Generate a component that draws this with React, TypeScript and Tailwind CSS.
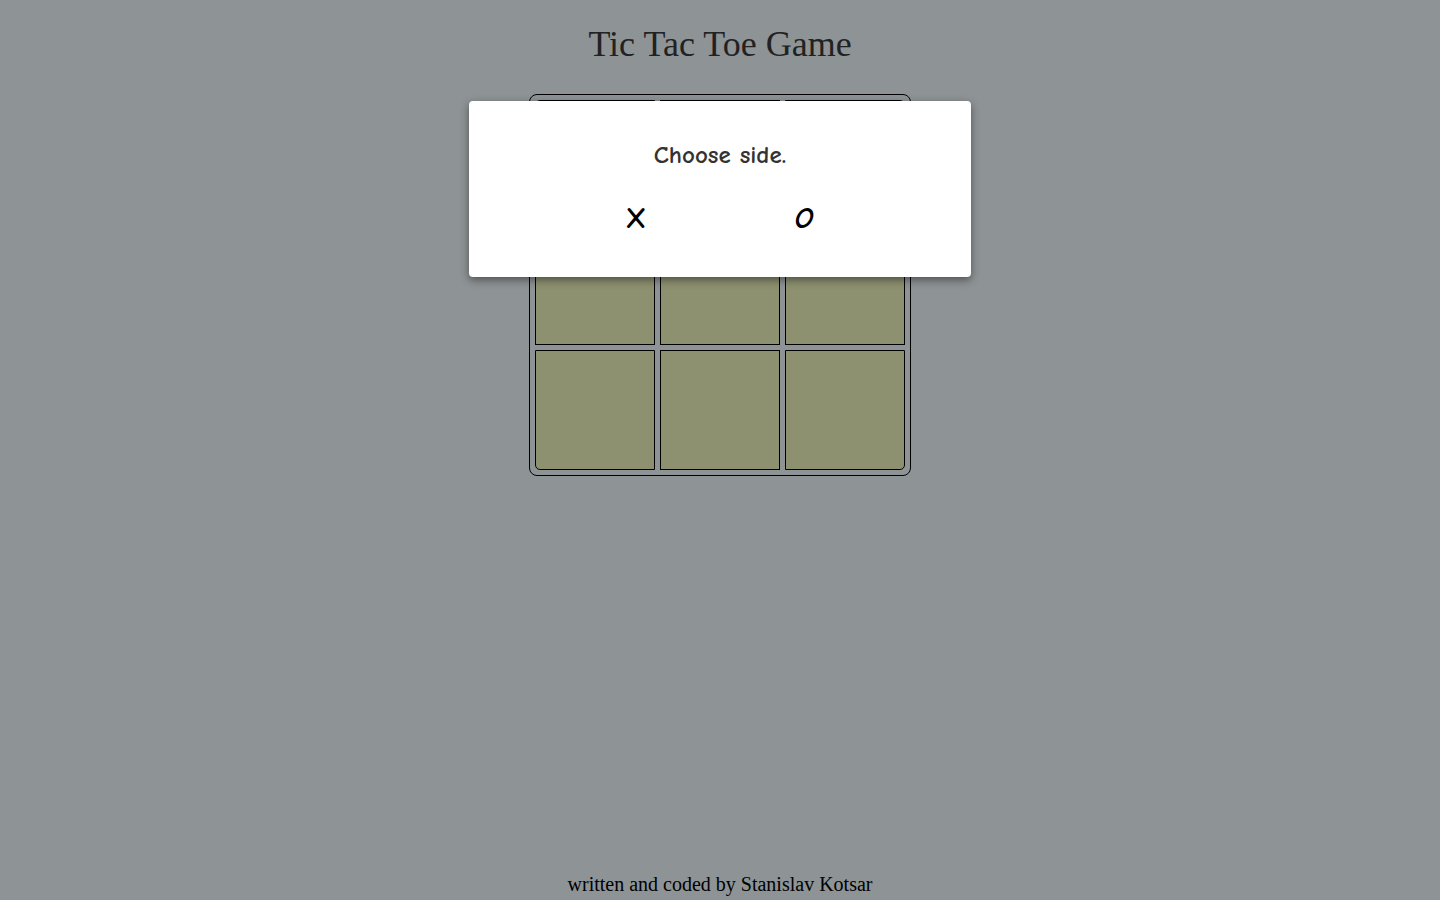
import React from 'react'

const cells = [0, 1, 2, 3, 4, 5, 6, 7, 8]

function cellRadius(i: number) {
  if (i === 0) return 'rounded-tl-[5px]'
  if (i === 2) return 'rounded-tr-[5px]'
  if (i === 6) return 'rounded-bl-[5px]'
  if (i === 8) return 'rounded-br-[5px]'
  return ''
}

export default function App() {
  return (
    <div className="relative min-h-screen bg-[#8e9396] flex flex-col items-center font-['Liberation_Serif',serif]">
      <h1 className="mt-[22px] h-[44px] text-[36px] leading-[44px] text-[#222]">Tic Tac Toe Game</h1>

      <div className="mt-[28px] w-[382px] h-[382px] border border-black rounded-[8px] p-[5px] grid grid-cols-3 gap-[5px]">
        {cells.map((i) => (
          <div key={i} className={`bg-[#8d9170] border border-black ${cellRadius(i)}`} />
        ))}
      </div>

      <div className="absolute left-[469px] top-[101px] w-[502px] h-[176px] bg-white rounded-[4px] shadow-[0_3px_8px_rgba(0,0,0,0.45)] flex flex-col items-center font-['Comic_Sans_MS','Comic_Neue','DejaVu_Sans',sans-serif]">
        <p className="mt-[39px] text-[25px] leading-[30px] font-bold text-[#333]">Choose side.</p>
        <div className="mt-[34px] flex gap-[144px] text-[30px] leading-[30px] font-bold text-black">
          <button className="w-[24px]">X</button>
          <button className="w-[24px] italic">O</button>
        </div>
      </div>

      <footer className="mt-auto h-[32px] text-[20px] leading-[32px] text-black">written and coded by Stanislav Kotsar</footer>
    </div>
  )
}
